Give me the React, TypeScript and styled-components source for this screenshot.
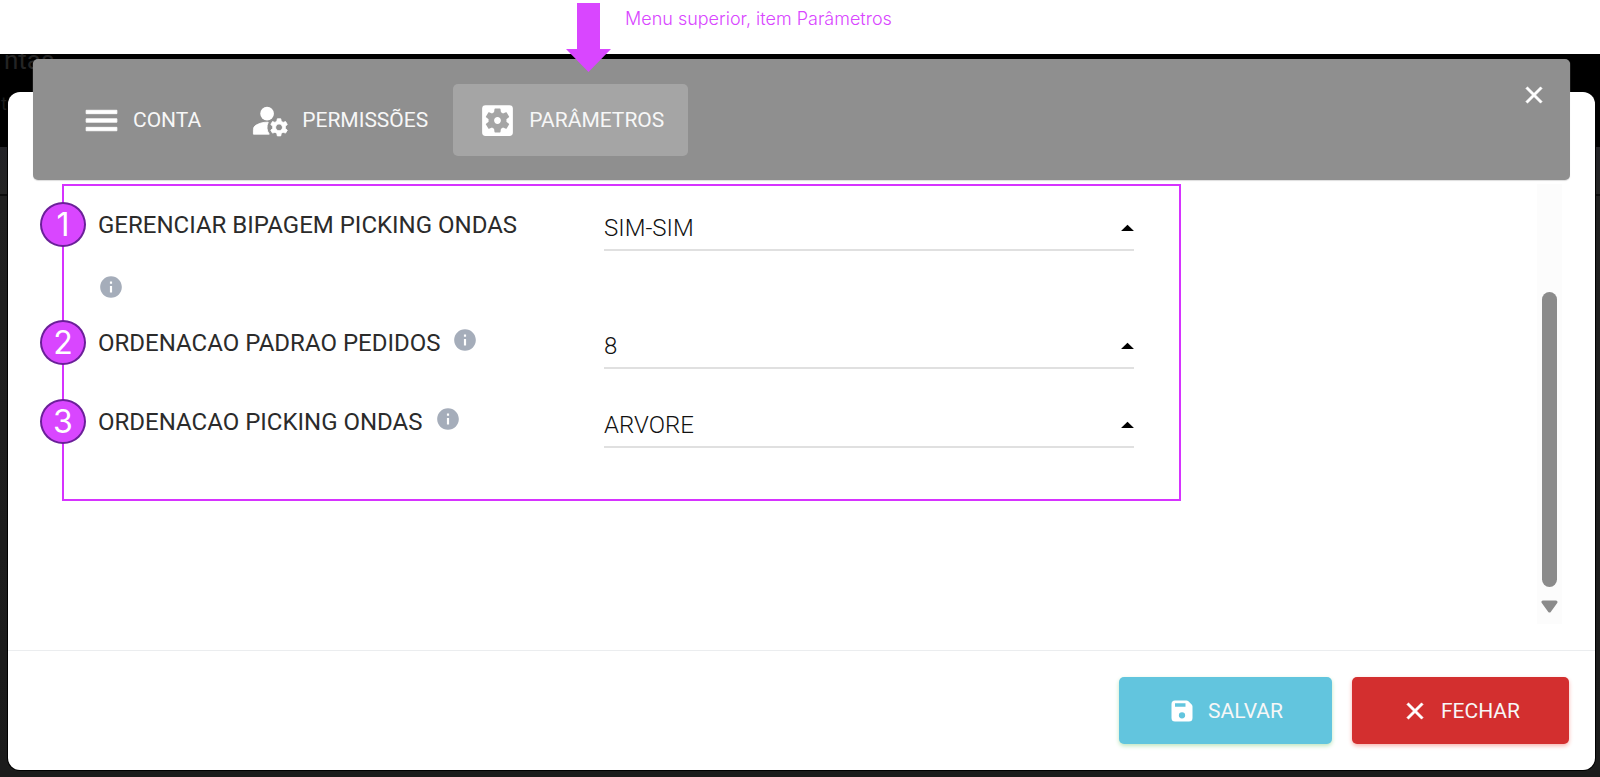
import React from 'react';
import styled, { createGlobalStyle } from 'styled-components';
import {
  MdArrowDropUp,
  MdClose,
  MdInfo,
  MdManageAccounts,
  MdMenu,
  MdSettingsApplications,
} from 'react-icons/md';

const GlobalStyle = createGlobalStyle`
  *, *::before, *::after { box-sizing: border-box; }
  body { margin: 0; background: #fff; }
  button, select { font: inherit; }
`;

const Page = styled.div`
  display: flex;
  flex-direction: column;
  min-height: 100vh;
  font-family: Roboto, 'Liberation Sans', sans-serif;
`;

const Banner = styled.p`
  margin: 0;
  height: 54px;
  padding: 7px 0 0 625px;
  font-family: Inter, 'Liberation Sans', sans-serif;
  font-size: 18px;
  line-height: 24px;
  font-weight: 300;
  color: #d946ff;
`;

const Backdrop = styled.div`
  position: relative;
  flex: 1;
  display: flex;
  padding: 38px 5px 7px 8px;
  background: linear-gradient(#000 93px, #222226 93px, #242424 140px, #0c0c0c 140px, #0c0c0c 142px, #202020 142px, #1b1b1b);
`;

const BehindTitle = styled.span`
  position: absolute;
  top: 0;
  left: 4px;
  height: 18px;
  overflow: hidden;
  display: flex;
  align-items: flex-end;
  font-size: 26px;
  line-height: 24px;
  color: #242424;
`;

const BehindText = styled.span`
  position: absolute;
  top: 40px;
  left: 1px;
  font-size: 18px;
  line-height: 20px;
  color: #1c1c1c;
`;

const Modal = styled.section`
  position: relative;
  flex: 1;
  display: flex;
  flex-direction: column;
  min-width: 0;
  background: #fff;
  border-radius: 12px;
  box-shadow: 0 0 0 1px #000;
`;

const Header = styled.header`
  position: relative;
  display: flex;
  align-items: flex-start;
  justify-content: space-between;
  margin: -33px 25px 0;
  padding: 25px 22px 24px 24px;
  border-radius: 5px;
  background: #8f8f8f;
  box-shadow: 0 1px 1px #ddd;
`;

const Tabs = styled.nav`
  display: flex;
  gap: 1px;
`;

const Tab = styled.button<{ $active?: boolean }>`
  position: relative;
  display: flex;
  align-items: center;
  gap: 11px;
  height: 72px;
  padding: 0 24px;
  border: 0;
  border-radius: 5px;
  background: ${(p) => (p.$active ? '#a5a5a5' : 'transparent')};
  color: #fff;
  font-size: 21px;
  line-height: 28px;
  cursor: pointer;
`;

const ButtonText = styled.span`
  color: #f7f7f7;
`;

const Pointer = styled.svg`
  position: absolute;
  top: -81px;
  left: 113px;
`;

const CloseButton = styled.button`
  display: flex;
  margin-top: -3px;
  padding: 0;
  border: 0;
  background: none;
  color: #fff;
  cursor: pointer;
`;

const BoldIcon = styled.span`
  display: flex;

  path:not([fill='none']) {
    stroke: currentColor;
    stroke-width: 0.5px;
  }
`;

const Body = styled.div`
  flex: 1;
  display: flex;
  justify-content: space-between;
  align-items: stretch;
  gap: 24px;
  padding: 4px 33px 26px 54px;
`;

const Fields = styled.div`
  flex: 1;
  align-self: flex-start;
  display: flex;
  flex-direction: column;
  gap: 27px;
  max-width: 1119px;
  padding: 23px 45px 41px 34px;
  border: 2px solid #d633ff;
`;

const Row = styled.div`
  position: relative;
  display: grid;
  grid-template-columns: 450fr 530fr;
  column-gap: 56px;
  align-items: start;
  min-height: 52px;
`;

const Badge = styled.span`
  position: absolute;
  top: -7px;
  left: -58px;
  display: flex;
  align-items: center;
  justify-content: center;
  width: 46px;
  height: 45px;
  border: 2px solid #6b2099;
  border-radius: 50%;
  background: #d946ff;
  color: #fff;
  font-family: Inter, 'Liberation Sans', sans-serif;
  font-size: 32px;
  line-height: 40px;
`;

const LabelCell = styled.div`
  display: flex;
  flex-wrap: wrap;
  align-items: flex-start;
  gap: 33px 12px;
  color: #2b2b2b;
  font-size: 24px;
  line-height: 32px;
`;

const InfoIcon = styled(MdInfo)`
  color: #a5adba;
`;

const SelectBox = styled.div`
  position: relative;
  color: #000;
`;

const Select = styled.select`
  display: block;
  width: 100%;
  height: 42px;
  padding: 0 0 2px;
  border: 0;
  border-bottom: 2px solid #e0e0e0;
  border-radius: 0;
  appearance: none;
  background: none;
  color: #111;
  font-size: 24px;
  line-height: 32px;
  font-weight: 300;
`;

const Caret = styled(MdArrowDropUp)`
  position: absolute;
  top: 4px;
  right: -9px;
  pointer-events: none;
`;

const Track = styled.div`
  display: flex;
  flex-direction: column;
  align-items: center;
  gap: 13px;
  width: 25px;
  padding: 108px 0 11px;
  background: #fcfcfc;
`;

const Thumb = styled.div`
  flex: 1;
  width: 15px;
  border-radius: 8px;
  background: #8b8b8b;
`;

const Footer = styled.footer`
  display: flex;
  justify-content: flex-end;
  gap: 20px;
  padding: 26px;
  border-top: 1px solid #ebedef;
`;

const Action = styled.button<{ $color: string; $shadow: string }>`
  display: flex;
  align-items: center;
  gap: 12px;
  height: 67px;
  padding: 0 49px;
  border: 0;
  border-radius: 5px;
  background: ${(p) => p.$color};
  box-shadow: 0 2px 4px ${(p) => p.$shadow};
  color: #fff;
  font-size: 21px;
  line-height: 28px;
  cursor: pointer;
`;

const SaveIcon = () => (
  <svg width="28" height="28" viewBox="0 0 24 24" fill="currentColor" aria-hidden="true">
    <path
      fillRule="evenodd"
      d="M6 3H15.800Q16.800 3 17.500 3.700L20.300 6.500Q21 7.200 21 8.200V18Q21 21 18 21H6Q3 21 3 18V6Q3 3 6 3ZM6 5.400V8.400H15V5.400ZM12 13A2.700 2.700 0 1 0 12 18.400A2.700 2.700 0 1 0 12 13Z"
    />
  </svg>
);

const fields = [
  { id: 'bipagem', label: 'GERENCIAR BIPAGEM PICKING ONDAS', value: 'SIM-SIM' },
  { id: 'pedidos', label: 'ORDENACAO PADRAO PEDIDOS', value: '8' },
  { id: 'ondas', label: 'ORDENACAO PICKING ONDAS', value: 'ARVORE' },
];

export default function App() {
  return (
    <Page>
      <GlobalStyle />
      <Banner>Menu superior, item Parâmetros</Banner>
      <Backdrop>
        <BehindTitle>ntas</BehindTitle>
        <BehindText>t</BehindText>
        <Modal>
          <Header>
            <Tabs>
              <Tab type="button">
                <BoldIcon>
                  <MdMenu size={41} />
                </BoldIcon>
                <ButtonText>CONTA</ButtonText>
              </Tab>
              <Tab type="button">
                <BoldIcon>
                  <MdManageAccounts size={41} />
                </BoldIcon>
                <ButtonText>PERMISSÕES</ButtonText>
              </Tab>
              <Tab type="button" $active>
                <MdSettingsApplications size={41} />
                <ButtonText>PARÂMETROS</ButtonText>
                <Pointer width="45" height="69" viewBox="0 0 45 69" aria-hidden="true">
                  <path d="M11 0H34V46H45L22.500 69L0 46H11Z" fill="#d946ff" />
                </Pointer>
              </Tab>
            </Tabs>
            <CloseButton type="button" aria-label="Fechar janela">
              <BoldIcon>
                <MdClose size={28} />
              </BoldIcon>
            </CloseButton>
          </Header>
          <Body>
            <Fields>
              {fields.map((field, index) => (
                <Row key={field.id}>
                  <Badge>{index + 1}</Badge>
                  <LabelCell>
                    <label htmlFor={field.id}>{field.label}</label>
                    <InfoIcon size={26} />
                  </LabelCell>
                  <SelectBox>
                    <Select id={field.id} defaultValue={field.value}>
                      <option>{field.value}</option>
                    </Select>
                    <Caret size={31} />
                  </SelectBox>
                </Row>
              ))}
            </Fields>
            <Track>
              <Thumb />
              <svg width="17" height="13" viewBox="0 0 17 13" aria-hidden="true">
                <path d="M2 2H15L8.500 11Z" fill="#8b8b8b" stroke="#8b8b8b" strokeWidth="3" strokeLinejoin="round" />
              </svg>
            </Track>
          </Body>
          <Footer>
            <Action type="button" $color="#62c5de" $shadow="#bfe6bf">
              <SaveIcon />
              <ButtonText>SALVAR</ButtonText>
            </Action>
            <Action type="button" $color="#d32f2f" $shadow="#f7b5b0">
              <BoldIcon>
                <MdClose size={28} />
              </BoldIcon>
              <ButtonText>FECHAR</ButtonText>
            </Action>
          </Footer>
        </Modal>
      </Backdrop>
    </Page>
  );
}
